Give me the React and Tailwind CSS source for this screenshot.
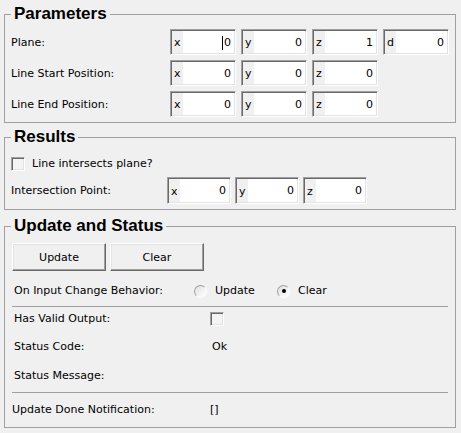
const font = { fontFamily: '"DejaVu Sans", Verdana, sans-serif' };

const sunken =
  "border border-t-[#a0a0a0] border-l-[#a0a0a0] border-b-white border-r-white shadow-[inset_1px_1px_0_#696969,inset_-1px_-1px_0_#e3e3e3]";

const VecInput = ({ label, value, caret = false, w = "w-[66px]", h = "h-[26px]" }) => (
  <div className={`${w} ${h} flex ${sunken} bg-white`}>
    <span className="w-[11px] ml-[1px] my-[1px] bg-[#f0f0f0] pl-[2px] flex items-center pt-[3px] text-[11px]">
      {label}
    </span>
    <span className="flex-1 flex items-center justify-end pr-[4px] pt-[2px] text-[11px]">
      {caret && <span className="w-px h-[14px] bg-black mr-px" />}
      {value}
    </span>
  </div>
);

const Check = () => (
  <span className={`inline-block w-[14px] h-[14px] bg-[#f4f4f4] ${sunken}`} />
);

const Radio = ({ checked = false }) => (
  <span className="w-[13px] h-[13px] rounded-full border border-[#a0a0a0] border-b-white border-r-white bg-gradient-to-br from-[#e0e0e0] to-white flex items-center justify-center">
    {checked && <span className="w-[4px] h-[4px] rounded-full bg-black" />}
  </span>
);

const Group = ({ title, className = "", inner = "", children }) => (
  <fieldset className={`w-[452px] border border-[#a0a0a0] ${className}`}>
    <legend
      className="ml-[6px] px-[3px] text-[17px] font-bold leading-[20px] text-black"
      style={{ fontFamily: '"Liberation Sans", Arial, sans-serif' }}
    >
      {title}
    </legend>
    <div className={inner}>{children}</div>
  </fieldset>
);

const Row = ({ label, children }) => (
  <div className="flex items-center h-[26px]">
    <span className="w-[159px] pt-[2px]">{label}</span>
    <div className="flex gap-[5px]">{children}</div>
  </div>
);

export default function App() {
  return (
    <div
      className="w-[461px] h-[433px] bg-[#f0f0f0] pt-[4px] pl-[4px] text-[11px] text-black overflow-hidden"
      style={font}
    >
      <Group title="Parameters" inner="pl-[6px] pb-[5px]">
        <div className="flex flex-col gap-[5px] mt-[5px]">
          <Row label="Plane:">
            <VecInput label="x" value="0" caret />
            <VecInput label="y" value="0" />
            <VecInput label="z" value="1" />
            <VecInput label="d" value="0" />
          </Row>
          <Row label="Line Start Position:">
            <VecInput label="x" value="0" />
            <VecInput label="y" value="0" />
            <VecInput label="z" value="0" />
          </Row>
          <Row label="Line End Position:">
            <VecInput label="x" value="0" />
            <VecInput label="y" value="0" />
            <VecInput label="z" value="0" />
          </Row>
        </div>
      </Group>

      <Group title="Results" className="mt-[4px]" inner="pl-[6px] pb-[5px]">
        <div className="flex items-center h-[20px] mt-[7px] gap-[7px]">
          <Check />
          <span>Line intersects plane?</span>
        </div>
        <div className="flex items-center h-[27px] mt-[3px]">
          <span className="w-[156px] pt-[2px]">Intersection Point:</span>
          <div className="flex gap-[4px]">
            <VecInput label="x" value="0" w="w-[64px]" h="h-[27px]" />
            <VecInput label="y" value="0" w="w-[64px]" h="h-[27px]" />
            <VecInput label="z" value="0" w="w-[64px]" h="h-[27px]" />
          </div>
        </div>
      </Group>

      <Group title="Update and Status" className="mt-[6px]" inner="px-[7px] pb-[7px]">
        <div className="flex gap-[4px] mt-[7px]">
          {["Update", "Clear"].map((b) => (
            <button
              key={b}
              className="w-[94px] h-[28px] pt-[2px] bg-[#f0f0f0] border border-t-white border-l-white border-b-[#696969] border-r-[#696969] shadow-[inset_-1px_-1px_0_#a0a0a0,inset_1px_1px_0_#e3e3e3] text-[11px]"
            >
              {b}
            </button>
          ))}
        </div>

        <div className="flex items-center h-[20px] mt-[10px] pl-[2px]">
          <span className="w-[180px] pt-[1px]">On Input Change Behavior:</span>
          <Radio />
          <span className="ml-[8px] w-[62px] pt-[1px]">Update</span>
          <Radio checked />
          <span className="ml-[8px] pt-[1px]">Clear</span>
        </div>

        <div className="h-px bg-[#a0a0a0] mt-[5px]" />

        <div className="flex items-center h-[20px] mt-[2px] pl-[2px]">
          <span className="w-[196px] pt-[1px]">Has Valid Output:</span>
          <Check />
        </div>
        <div className="flex items-center h-[20px] mt-[8px] pl-[2px] pt-[1px]">
          <span className="w-[198px]">Status Code:</span>
          <span>Ok</span>
        </div>
        <div className="flex items-center h-[20px] mt-[9px] pl-[2px] pt-[1px]">
          <span>Status Message:</span>
        </div>

        <div className="h-px bg-[#a0a0a0] mt-[6px]" />

        <div className="flex items-center h-[20px] mt-[7px] pt-[1px]">
          <span className="w-[198px]">Update Done Notification:</span>
          <span>[]</span>
        </div>
      </Group>
    </div>
  );
}
